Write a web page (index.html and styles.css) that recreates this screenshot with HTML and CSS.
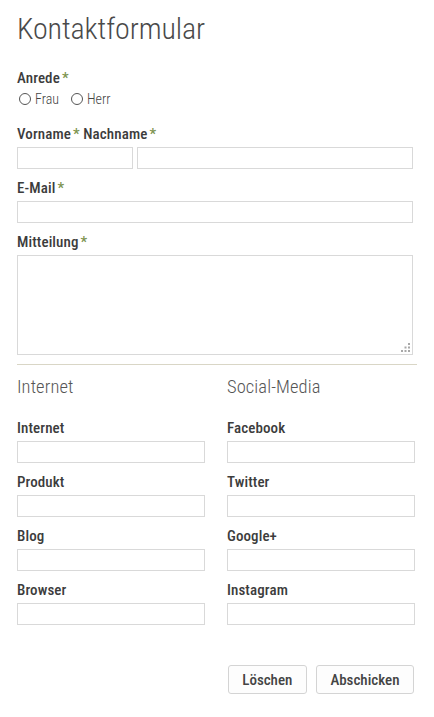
FILE: index.html
```html
<!DOCTYPE html>
<html lang="de">
<head>
    <meta charset="UTF-8">
    <meta name="viewport" content="width=device-width, initial-scale=1.0">
    <title>Kontaktformular</title>
    <link rel="stylesheet" href="styles.css">
</head>
<body>
    <form class="contact-form">
        <h1 class="form-title">Kontaktformular</h1>

        <div class="main-fields">
            <div class="field">
                <div class="field-label">Anrede<span class="req">*</span></div>
                <div class="radio-row">
                    <label class="radio"><input type="radio" name="anrede"> Frau</label>
                    <label class="radio"><input type="radio" name="anrede"> Herr</label>
                </div>
            </div>

            <div class="field">
                <div class="field-label">Vorname<span class="req">*</span> Nachname<span class="req">*</span></div>
                <div class="name-row">
                    <input type="text" class="input first-name">
                    <input type="text" class="input last-name">
                </div>
            </div>

            <div class="field">
                <div class="field-label">E-Mail<span class="req">*</span></div>
                <input type="text" class="input">
            </div>

            <div class="field last">
                <div class="field-label">Mitteilung<span class="req">*</span></div>
                <div class="message-wrap">
                    <textarea class="input message"></textarea>
                    <svg class="grip" width="9" height="9" viewBox="0 0 9 9">
                        <rect x="7" y="0" width="2" height="2" fill="#a8a8a8"/>
                        <rect x="3.5" y="3.5" width="2" height="2" fill="#a8a8a8"/>
                        <rect x="7" y="3.5" width="2" height="2" fill="#a8a8a8"/>
                        <rect x="0" y="7" width="2" height="2" fill="#a8a8a8"/>
                        <rect x="3.5" y="7" width="2" height="2" fill="#a8a8a8"/>
                        <rect x="7" y="7" width="2" height="2" fill="#a8a8a8"/>
                    </svg>
                </div>
            </div>
        </div>

        <hr class="divider">

        <div class="columns">
            <div class="column">
                <h2 class="column-title">Internet</h2>
                <div class="field">
                    <div class="field-label">Internet</div>
                    <input type="text" class="input">
                </div>
                <div class="field">
                    <div class="field-label">Produkt</div>
                    <input type="text" class="input">
                </div>
                <div class="field">
                    <div class="field-label">Blog</div>
                    <input type="text" class="input">
                </div>
                <div class="field">
                    <div class="field-label">Browser</div>
                    <input type="text" class="input">
                </div>
            </div>
            <div class="column">
                <h2 class="column-title">Social-Media</h2>
                <div class="field">
                    <div class="field-label">Facebook</div>
                    <input type="text" class="input">
                </div>
                <div class="field">
                    <div class="field-label">Twitter</div>
                    <input type="text" class="input">
                </div>
                <div class="field">
                    <div class="field-label">Google+</div>
                    <input type="text" class="input">
                </div>
                <div class="field">
                    <div class="field-label">Instagram</div>
                    <input type="text" class="input">
                </div>
            </div>
        </div>

        <div class="actions">
            <button type="reset" class="btn">Löschen</button>
            <button type="submit" class="btn">Abschicken</button>
        </div>
    </form>
</body>
</html>
```

FILE: styles.css
```css
body {
    margin: 0;
    padding: 11px 0 0 17px;
    background: #fff;
    color: #3c3c3c;
    font-family: "Roboto Condensed", Roboto, sans-serif;
}

.contact-form {
    width: 398px;
}

.form-title {
    margin: 0 0 23px;
    font-size: 30px;
    line-height: 36px;
    font-weight: 300;
    letter-spacing: -0.1px;
    color: #4a4a4a;
}

.main-fields {
    padding-right: 2px;
}

.field {
    display: flex;
    flex-direction: column;
    margin-bottom: 11px;
}

.field.last {
    margin-bottom: 9px;
}

.field-label {
    font-size: 15px;
    line-height: 17px;
    font-weight: 500;
    letter-spacing: 0.1px;
    color: #3c3c3c;
    margin-bottom: 4px;
}

.req {
    color: #7d9450;
    margin-left: 2px;
}

.radio-row {
    display: flex;
    gap: 10px;
    height: 18px;
    align-items: center;
    margin-top: -1px;
    margin-bottom: 7px;
}

.radio {
    display: flex;
    align-items: center;
    gap: 4px;
    font-size: 14px;
    font-weight: 300;
    color: #444;
}

.radio input {
    appearance: none;
    margin: 0 0 0 2px;
    width: 12px;
    height: 12px;
    border: 1px solid #555;
    border-radius: 50%;
    background: #fff;
}

.input {
    box-sizing: border-box;
    display: block;
    width: 100%;
    height: 22px;
    margin: 0;
    border: 1px solid #d9d9d9;
    background: #fff;
    font-family: inherit;
}

.name-row {
    display: flex;
    gap: 4px;
}

.name-row .first-name {
    width: 116px;
    flex: none;
}

.name-row .last-name {
    flex: 1;
}

.message-wrap {
    position: relative;
}

.message {
    height: 100px;
    resize: none;
}

.grip {
    position: absolute;
    right: 3px;
    bottom: 3px;
}

.divider {
    margin: 0 -2px 11px 0;
    border: 0;
    border-top: 1px solid #d9d6c6;
}

.columns {
    display: grid;
    grid-template-columns: 188px 188px;
    column-gap: 22px;
}

.column-title {
    margin: 0 0 22px;
    font-size: 18.5px;
    line-height: 22px;
    font-weight: 300;
    letter-spacing: 0.1px;
    color: #555;
}

.actions {
    display: flex;
    justify-content: flex-end;
    gap: 9px;
    padding-right: 1px;
    margin-top: 29px;
}

.btn {
    height: 29px;
    padding: 0 13.5px;
    border: 1px solid #d4d4d4;
    border-radius: 3px;
    background: #fdfdfd;
    font-family: inherit;
    font-size: 15px;
    font-weight: 500;
    color: #444;
}
```
